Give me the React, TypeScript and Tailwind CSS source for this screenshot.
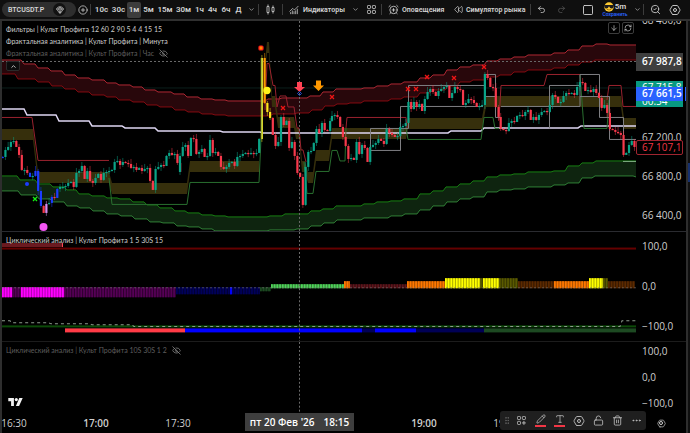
import React from "react";
import {
  AlarmClockPlus,
  ArrowDown,
  ChartNoAxesCombined,
  ChevronDown,
  ChevronUp,
  CirclePlus,
  Ellipsis,
  EyeOff,
  Gem,
  GripVertical,
  Hexagon,
  LockOpen,
  Pencil,
  Redo2,
  RefreshCw,
  Rewind,
  SearchCheck,
  Square,
  Trash2,
  Type,
  Undo2,
} from "lucide-react";

type Point = [number, number];

/* ---------- price data ---------- */

const STEP = 2.73;

const SEGMENTS: { x: number; closes: number[] }[] = [
  {
    x: 2.7,
    closes: [
      157, 150, 147, 142, 141, 147, 155, 170, 170, 173, 177, 176, 171, 191, 206, 213, 204, 203, 197, 198, 189, 187,
      187, 186, 183, 182, 187, 173, 171, 166, 179, 171, 181, 183, 178, 174, 180, 173, 172, 171, 170, 162, 161, 165,
      162, 163, 164, 168, 167, 170, 168, 171, 169, 168, 181, 190, 169, 167, 165, 166, 156, 153, 155, 154, 163, 172,
    ],
  },
  {
    x: 180,
    closes: [
      156, 147, 145, 156, 138, 139, 154, 152, 149, 157, 156, 140, 153, 152, 156, 167, 169, 167, 163, 162, 166, 157,
      156, 154, 153, 154, 153, 154, 153, 139, 58, 103, 112, 118, 135, 146, 142, 117, 125, 121, 148, 142, 156, 173,
      177, 205, 167, 152, 151, 143, 129, 133, 123, 130, 131, 121,
    ],
  },
  {
    x: 332,
    closes: [
      116, 115, 117, 127, 137, 146, 159, 158, 160, 142, 154, 145, 148, 162, 147, 145, 143, 139, 141, 144, 129, 133,
      135, 137, 136, 127, 126, 123, 102, 109, 102, 107, 104, 111, 99, 92, 89, 92, 96, 91, 89, 87, 86, 98, 93, 87,
      89, 90, 105, 103, 99, 100, 103, 107, 106, 105, 74, 78, 87, 88, 107, 117,
    ],
  },
  {
    x: 500.7,
    closes: [
      129, 130, 131, 123, 121, 122, 116, 115, 116, 112, 110, 120, 117, 120, 115, 112, 111, 112, 105, 95, 97, 103,
      102, 96, 93, 94, 93, 95, 87, 82, 83, 91, 90, 92, 89, 93, 98, 108, 105, 113, 129, 130, 132, 133, 135, 155, 153,
      145, 141, 147,
    ],
  },
];

const UP = "#0aa588";
const DOWN = "#f7394c";

type Candle = { x: number; open: number; close: number; color: string };

const candles: Candle[] = [];
let lastClose = 158;
SEGMENTS.forEach((segment, s) => {
  segment.closes.forEach((close, i) => {
    let color = close <= lastClose ? UP : DOWN;
    if (s === 0 && [0, 10, 12, 13, 14, 18, 20].includes(i)) color = "#1c3cff";
    if (s === 0 && i === 16) color = "#d58cf0";
    if (s === 1 && i >= 30 && i <= 33) color = i === 31 ? "#ff9800" : "#ffe61a";
    candles.push({ x: segment.x + i * STEP, open: lastClose, close, color });
    lastClose = s === 1 && i === 30 ? 58 : close;
  });
});

/* ---------- bands and levels ---------- */

const RED_TOP: Point[] = [
  [2, 60], [24, 64], [38, 68], [51, 71], [65, 75], [78, 78], [92, 80], [107, 83], [119, 85], [133, 87], [145, 90],
  [158, 92], [174, 94], [187, 97], [201, 99], [215, 100], [228, 101], [268, 99], [282, 98], [310, 96], [323, 92],
  [336, 89], [364, 88], [377, 86], [391, 84], [404, 82], [420, 78], [433, 75], [447, 70], [460, 67], [473, 65],
  [487, 61], [500, 59], [514, 57], [528, 55], [554, 53], [568, 50], [582, 46], [596, 44], [610, 45], [636, 45],
];
const RED_BOTTOM: Point[] = [
  [2, 74], [18, 79], [38, 82], [52, 86], [65, 89], [78, 92], [92, 95], [107, 97], [119, 100], [133, 102], [147, 105],
  [160, 107], [175, 110], [188, 112], [202, 114], [215, 115], [228, 116], [273, 114], [297, 113], [312, 110],
  [325, 106], [337, 104], [350, 103], [364, 101], [391, 99], [404, 97], [420, 93], [433, 90], [448, 86], [460, 82],
  [473, 80], [487, 77], [500, 75], [514, 72], [528, 70], [554, 68], [568, 65], [582, 62], [595, 60], [636, 60],
];
const GREEN_TOP: Point[] = [
  [2, 176], [20, 180], [38, 184], [53, 187], [67, 190], [79, 194], [92, 196], [107, 198], [120, 199], [133, 202],
  [147, 205], [160, 208], [175, 211], [188, 213], [202, 215], [215, 216], [228, 217], [270, 216], [285, 214],
  [311, 211], [323, 209], [336, 206], [364, 204], [377, 202], [391, 201], [404, 199], [420, 194], [433, 191],
  [446, 187], [460, 184], [473, 181], [487, 177], [500, 175], [514, 174], [528, 172], [554, 171], [568, 166],
  [582, 163], [596, 161], [636, 161],
];
const GREEN_BOTTOM: Point[] = [
  [2, 191], [21, 195], [39, 199], [53, 202], [67, 206], [80, 208], [93, 211], [107, 214], [121, 216], [135, 219],
  [150, 222], [163, 223], [177, 226], [189, 227], [202, 229], [215, 231], [270, 230], [297, 229], [311, 226],
  [324, 223], [337, 220], [364, 218], [391, 216], [405, 214], [420, 210], [433, 206], [447, 202], [460, 199],
  [473, 197], [487, 192], [500, 190], [514, 189], [528, 187], [554, 185], [568, 183], [582, 178], [595, 176],
  [636, 177],
];
const MEAN: Point[] = [
  [2, 109], [27, 115], [59, 121], [92, 126], [125, 128], [158, 131], [223, 132], [263, 133], [451, 131], [484, 128],
  [581, 126], [636, 126],
];

const stepped = (points: Point[]): Point[] =>
  points.flatMap(([x, y], i): Point[] => (i === 0 ? [[x, y]] : [[x - 3, points[i - 1][1]], [x, y]]));
const toPoints = (points: Point[]) => points.map((p) => p.join(",")).join(" ");
const area = (top: Point[], bottom: Point[]) => toPoints([...stepped(top), ...stepped(bottom).reverse()]);

const ZONE_BEFORE: Point[] = [
  [2, 129], [33, 129], [38, 172], [109, 172], [112, 183], [187, 183], [190, 161], [259, 161],
];
const ZONE_AFTER: Point[] = [
  [265, 62], [267, 42], [269, 42], [272, 96], [275, 96], [278, 117], [294, 117], [296, 128], [299, 128], [302, 161],
  [305, 161], [308, 172], [313, 172], [316, 150], [329, 150], [332, 128], [406, 128], [408, 118], [482, 118],
  [486, 96], [621, 96], [624, 118], [636, 118],
];
const zoneArea = (top: Point[]) => toPoints([...top, ...top.map(([x, y]): Point => [x, y + 11]).reverse()]);

/* ---------- oscillator data ---------- */

type Bars = { from: number; to: number; y: number; h: number; a: string; b: string };
const BARS: Bars[] = [
  { from: 2, to: 12, y: 287, h: 10, a: "#ff00ff", b: "#b000b0" },
  { from: 12, to: 21, y: 287, h: 10, a: "#560056", b: "#300030" },
  { from: 21, to: 64, y: 287, h: 10, a: "#ff00ff", b: "#b000b0" },
  { from: 64, to: 176, y: 287, h: 10, a: "#560056", b: "#2c002c" },
  { from: 176, to: 230, y: 287, h: 7, a: "#00005a", b: "#000030" },
  { from: 230, to: 232, y: 287, h: 7, a: "#0000ff", b: "#0000ff" },
  { from: 232, to: 260, y: 287, h: 7, a: "#00005a", b: "#000030" },
  { from: 260, to: 271, y: 287, h: 4, a: "#1d4a22", b: "#102c14" },
  { from: 271, to: 344, y: 284, h: 4, a: "#50d45a", b: "#2f7d35" },
  { from: 344, to: 350, y: 281, h: 7, a: "#ff7800", b: "#b35400" },
  { from: 350, to: 407, y: 284, h: 4, a: "#5f161c", b: "#330b0f" },
  { from: 407, to: 445, y: 281, h: 7, a: "#ff7800", b: "#a85000" },
  { from: 445, to: 480, y: 278, h: 10, a: "#ffff00", b: "#aaaa00" },
  { from: 480, to: 483, y: 278, h: 10, a: "#5a5a00", b: "#3c3c00" },
  { from: 483, to: 499, y: 278, h: 10, a: "#ffff00", b: "#aaaa00" },
  { from: 499, to: 518, y: 278, h: 10, a: "#5a5a00", b: "#333300" },
  { from: 518, to: 554, y: 281, h: 7, a: "#5c2a00", b: "#331700" },
  { from: 554, to: 589, y: 281, h: 7, a: "#ff7800", b: "#a85000" },
  { from: 589, to: 603, y: 278, h: 10, a: "#ffff00", b: "#aaaa00" },
  { from: 603, to: 608, y: 278, h: 10, a: "#5a5a00", b: "#333300" },
  { from: 608, to: 635, y: 281, h: 7, a: "#5c2a00", b: "#331700" },
];

const TREND = [
  { from: 65, to: 185, color: "#ff3b46" },
  { from: 185, to: 362, color: "#0000ff" },
  { from: 362, to: 375, color: "#000055" },
  { from: 375, to: 416, color: "#0000ff" },
  { from: 416, to: 484, color: "#000055" },
  { from: 484, to: 636, color: "#1d4a22" },
];

const CROSSES: Point[] = [
  [283, 108], [332, 97], [408, 89], [416, 89], [427, 77], [454, 78], [484, 67],
];

/* ---------- drawings ---------- */

function Crosshair({ from, to }: { from: number; to: number }) {
  return <line x1="299.5" x2="299.5" y1={from} y2={to} stroke="#6a6a6a" strokeDasharray="2 2" />;
}

function PriceChart() {
  return (
    <svg className="min-w-0 flex-1" viewBox="2 21 634 210" preserveAspectRatio="none" fill="none" aria-label="BTCUSDT.P">
      <line x1="2" x2="636" y1="88" y2="88" stroke="#0b1f1c" />
      <polygon points={area(RED_TOP, RED_BOTTOM)} fill="#28070b" />
      <polygon points={area(GREEN_TOP, GREEN_BOTTOM)} fill="#0e240f" />
      <polyline points={toPoints(stepped(RED_TOP))} stroke="#b02833" />
      <polyline points={toPoints(stepped(RED_BOTTOM))} stroke="#860a10" />
      <polyline points={toPoints(stepped(GREEN_TOP))} stroke="#178012" />
      <polyline points={toPoints(stepped(GREEN_BOTTOM))} stroke="#2f8036" />
      <polygon points={zoneArea(ZONE_BEFORE)} fill="#362f0c" />
      <polygon points={zoneArea(ZONE_AFTER)} fill="#362f0c" />
      <polyline points={toPoints(stepped(MEAN))} stroke="#ded6f2" strokeWidth="1.5" />

      <g stroke="#9a222e">
        <polyline points="2,117.5 32,117.5 38,160.5 109,160.5" />
        <polyline points="265,110 267,63.5 269,63.5 273,85.5 275,85.5 277,107 280,96 286,96 288,107 294,107 297,128 299,128 301,150 303,150 306,162" />
        <polyline points="346,128 347,117.5 406,117.5 407,128" />
        <polyline points="499,120 501,85.5 544,85.5 547,74.5 580,74.5" />
        <polyline points="607,100 609,85.5 621,85.5 623,106.5 636,106.5" />
      </g>
      <g stroke="#296f2f">
        <polyline points="109,178 112,204.5 187,204.5 190,182.5 259,182.5 261,139" />
        <polyline points="304,162 307,193.5 313,193.5 316,171.5 329,171.5 332,150.5 337,150.5 340,161 345,161 346,128" />
        <polyline points="406,128 408,139.5 481,139.5 484,117.5 493,117.5 495,128.5 499,128.5" />
        <polyline points="580,75 584,128.5 607,128.5 609,100" />
      </g>
      <g stroke="#808084">
        <polyline points="370.5,128.5 370.5,150.5 400.5,150.5 400.5,106.5 483,106.5" />
        <polyline points="370.5,128.5 408.5,128.5 408.5,85.5 484.5,85.5 484.5,74.5 495.5,74.5 495.5,117.5 500,117.5" />
        <polyline points="484,96.5 497,96.5" />
        <polyline points="501,106.5 580,106.5 580,74.5 599.5,74.5 599.5,117.5 623.5,117.5 623.5,139.5" />
        <polyline points="549.5,128.5 549.5,85.5 580,85.5" />
        <polyline points="580,96.5 609.5,96.5 609.5,139.5 636,139.5" />
      </g>
      <line x1="623" x2="636" y1="161.5" y2="161.5" stroke="#7fae84" />

      <line x1="2" x2="636" y1="61.5" y2="61.5" stroke="#6a6a6a" strokeDasharray="2 2" />
      <Crosshair from={21} to={231} />

      {candles.map((c, i) => {
        const top = Math.min(c.open, c.close);
        const height = Math.max(1.2, Math.abs(c.open - c.close));
        const wick = 1 + ((i * 7) % 5);
        return (
          <g key={i}>
            <line x1={c.x} x2={c.x} y1={top - wick} y2={top + height + ((i * 3) % 5)} stroke={c.color} strokeOpacity="0.5" />
            <rect x={c.x - 1.1} y={top} width="2.2" height={height} fill={c.color} />
          </g>
        );
      })}
      <line x1="261.8" x2="261.8" y1="58" y2="139" stroke="#5f9a5a" strokeWidth="0.8" />

      {CROSSES.map(([x, y]) => (
        <path key={x} d={`M${x - 2} ${y - 2}l4 4m0-4l-4 4`} stroke="#f01515" strokeWidth="1.3" />
      ))}
      <path d="M33 197l4 4m0-4l-4 4" stroke="#13f013" strokeWidth="1.3" />
      <circle cx="27" cy="184" r="2" fill="#1c3cff" />
      <circle cx="43.5" cy="227" r="4" fill="#f556f5" />
      <circle cx="267" cy="90.5" r="3.7" fill="#fff21a" />
      <rect x="259" y="46" width="4" height="4" rx="1" fill="#ff8a00" stroke="#ff1a1a" strokeWidth="1.2" />
      <path d="M297 82h5v5h3l-5.5 5-5.5-5h3z" fill="#ff4254" />
      <path d="M316 80.5h5v5h3l-5.5 5.5-5.5-5.5h3z" fill="#ff9800" />
      <path d="M299.5 91.5l2 2-2 2-2-2z" stroke="#2350d8" />
    </svg>
  );
}

function CycleChart() {
  return (
    <svg className="min-w-0 flex-1" viewBox="2 232 634 109" preserveAspectRatio="none" aria-label="Циклический анализ">
      <rect x="2" y="243" width="61" height="4" fill="#6b1a20" />
      <rect x="62" y="243" width="1" height="4" fill="#ff4a55" />
      <rect x="2" y="247.5" width="634" height="2" fill="#640000" />
      {BARS.map((group) => (
        <g key={group.from}>
          <rect x={group.from} y={group.y} width={group.to - group.from} height={group.h} fill={group.b} />
          <line
            x1={group.from}
            x2={group.to}
            y1={group.y + group.h / 2}
            y2={group.y + group.h / 2}
            stroke={group.a}
            strokeWidth={group.h}
            strokeDasharray="1.73 1"
          />
        </g>
      ))}
      <line x1="2" x2="636" y1="287.5" y2="287.5" stroke="#777" strokeOpacity="0.6" strokeDasharray="2 2" />
      <rect x="2" y="325" width="634" height="2" fill="#0c4a08" />
      <polyline
        points="2,320.5 10,320.5 12,322.5 49,322.5 51,323.5 90,323.5 92,324.5 132,324.5 134,326 620,326 622,320.5 636,320.5"
        fill="none"
        stroke="#8c9a8c"
        strokeDasharray="3 3"
      />
      {TREND.map((t) => (
        <rect key={t.from} x={t.from} y="328" width={t.to - t.from} height="4" fill={t.color} />
      ))}
      <Crosshair from={232} to={341} />
    </svg>
  );
}

function HexSettings({ className }: { className: string }) {
  return (
    <span className={`relative inline-flex items-center justify-center ${className}`}>
      <Hexagon className="size-full rotate-90" strokeWidth={1.8} />
      <span className="absolute size-[4px] rounded-full border border-current" />
    </span>
  );
}

function CandlesIcon() {
  return (
    <svg className="h-[11px] w-[9px]" viewBox="0 0 9 11" fill="none" stroke="currentColor" strokeWidth="0.8">
      <path d="M1 2.500h2v6H1zM2 .5v2M2 8.500v2M6 3.500h2v4H6zM7 1.500v2M7 7.500v2" />
    </svg>
  );
}

function WidgetsIcon({ className, plus }: { className: string; plus?: boolean }) {
  return (
    <svg className={className} viewBox="0 0 10 10" fill="none" stroke="currentColor">
      <rect x="0.5" y="0.5" width="3.4" height="3.4" rx="0.9" />
      <rect x="6" y="0.5" width="3.4" height="3.4" rx="0.9" />
      <rect x="0.5" y="6" width="3.4" height="3.4" rx="0.9" />
      {plus ? <path d="M7.700 5.500v4.300M5.500 7.700h4.300" /> : <rect x="6" y="6" width="3.4" height="3.4" rx="0.9" />}
    </svg>
  );
}

function SunglassesFace() {
  return (
    <svg className="size-[10px]" viewBox="0 0 20 20">
      <circle cx="10" cy="10" r="9.5" fill="#ffcc32" />
      <path d="M0 6h20l-1 4.500q-1 2.500-4 2.500-3.500 0-4.500-4h-1q-1 4-4.500 4-3 0-4-2.500z" fill="#1c1c1c" />
      <path d="M5.500 14.500q4.500 3 9 0" fill="none" stroke="#8a5a00" strokeWidth="1.5" />
    </svg>
  );
}

function BrandMark() {
  return (
    <svg className="h-[8px] w-[15px]" viewBox="0 0 36 20" fill="#f2f2f2" aria-label="TradingView">
      <path d="M14 20H7V8H0V0h14zM27 20h-8L27.500 0H36z" />
      <circle cx="20" cy="4" r="4" />
    </svg>
  );
}

/* ---------- layout parts ---------- */

const Divider = () => <span className="h-[11px] w-px shrink-0 bg-[#3c3c3c]" />;

const INTERVALS: [string, string][] = [
  ["10с", "w-[17px]"],
  ["30с", "w-[17px]"],
  ["1м", "w-[14px]"],
  ["5м", "w-[15px]"],
  ["15м", "w-[18px]"],
  ["30м", "w-[19px]"],
  ["1ч", "w-[13px]"],
  ["4ч", "w-[13px]"],
  ["6ч", "w-[14px]"],
  ["Д", "w-[11px]"],
];

function Header() {
  return (
    <header className="flex h-[21px] shrink-0 items-center border-b-2 border-[#303030] bg-[#0f0f0f] font-['Roboto','Noto_Sans',sans-serif] text-[7px] leading-[10px] font-semibold whitespace-nowrap text-[#d4d4d4]">
      <div className="ml-[2px] flex h-[15px] w-[74px] shrink-0 items-center justify-between rounded-full bg-[#2e2e2e] pr-[2px] pl-[6px]">
        <button>BTCUSDT.P</button>
        <button aria-label="Премиум" className="mr-[8px] flex size-[13px] items-center justify-center rounded-full bg-[#121212]">
          <Gem className="size-[8px]" />
        </button>
      </div>
      <button aria-label="Добавить символ" className="flex min-w-0 flex-1 justify-center">
        <CirclePlus className="size-[10px] shrink-0" strokeWidth={1.8} />
      </button>
      <Divider />
      <nav className="ml-[2px] flex shrink-0 items-center text-[8px]">
        {INTERVALS.map(([label, width]) => (
          <button
            key={label}
            className={`${width} flex h-[16px] items-center justify-center rounded-[2px] ${label === "1м" ? "bg-[#3c3c3c]" : ""}`}
          >
            {label}
          </button>
        ))}
      </nav>
      <button aria-label="Интервалы" className="flex w-[14px] shrink-0 justify-center">
        <ChevronDown className="size-[7px]" />
      </button>
      <Divider />
      <button aria-label="Свечи" className="flex w-[23px] shrink-0 justify-center">
        <CandlesIcon />
      </button>
      <Divider />
      <button className="ml-[6px] flex w-[60px] shrink-0 items-center gap-[4px]">
        <ChartNoAxesCombined className="size-[10px] shrink-0" strokeWidth={1.8} />
        <span>Индикаторы</span>
      </button>
      <button aria-label="Избранные индикаторы" className="flex w-[12px] shrink-0 justify-center">
        <ChevronDown className="size-[7px]" />
      </button>
      <button aria-label="Шаблоны" className="flex w-[20px] shrink-0 justify-center">
        <WidgetsIcon className="size-[9px]" />
      </button>
      <Divider />
      <button className="ml-[6px] flex w-[62px] shrink-0 items-center gap-[3px]">
        <AlarmClockPlus className="size-[11px] shrink-0" strokeWidth={1.8} />
        <span>Оповещения</span>
      </button>
      <button className="ml-[4px] flex w-[76px] shrink-0 items-center gap-[3px]">
        <Rewind className="size-[9px] shrink-0" strokeWidth={1.8} />
        <span>Симулятор рынка</span>
      </button>
      <Divider />
      <button aria-label="Отменить" className="flex w-[20px] shrink-0 justify-center">
        <Undo2 className="size-[9px]" />
      </button>
      <button aria-label="Повторить" className="flex w-[20px] shrink-0 justify-center text-[#555]">
        <Redo2 className="size-[9px]" />
      </button>
      <button aria-label="Макет" className="ml-[6px] flex w-[22px] shrink-0 justify-center">
        <Square className="size-[12px]" strokeWidth={1.8} />
      </button>
      <button className="flex w-[32px] shrink-0 flex-col items-center">
        <span className="flex items-center gap-[1px] text-[8px]">
          <SunglassesFace />
          5m
        </span>
        <span className="text-[5px] leading-[5px] text-[#2962ff]">Сохранить</span>
      </button>
      <button aria-label="Макеты" className="flex w-[12px] shrink-0 justify-center">
        <ChevronDown className="size-[7px]" />
      </button>
      <Divider />
      <button aria-label="Быстрый поиск" className="flex w-[22px] shrink-0 justify-center">
        <SearchCheck className="size-[11px]" strokeWidth={1.8} />
      </button>
      <button aria-label="Настройки" className="mr-[6px] flex w-[18px] shrink-0 justify-center">
        <HexSettings className="size-[12px]" />
      </button>
    </header>
  );
}

const LEGEND_BOX = "absolute top-[2px] left-[4px] font-['Lato','Roboto',sans-serif] text-[7px] leading-[12px]";

function Legend({ text, hidden }: { text: string; hidden?: boolean }) {
  return (
    <p className={`flex items-center gap-[5px] ${hidden ? "text-[#5e5e5e]" : "text-[#cccccc]"}`}>
      {text}
      {hidden && <EyeOff className="size-[9px] text-[#8a8a8a]" />}
    </p>
  );
}

const PRICES = ["68 400,0", "", "", "67 200,0", "66 800,0", "66 400,0"];
const LEVELS = ["100,0", "0,0", "−100,0"];
const TIMES = ["16:30", "17:00", "17:30", "", "", "19:00", "19:30"];

export default function App() {
  return (
    <div className="flex h-screen flex-col overflow-hidden bg-black font-['Open_Sans','Noto_Sans',sans-serif] text-[#cfcfcf]">
      <Header />
      <div className="flex min-h-0 flex-1">
        <div className="w-[2px] shrink-0 bg-[#2e2e2e]" />
        <main className="relative flex min-w-0 flex-1 flex-col text-[10px] leading-[14px]">
          <section className="relative flex min-h-0 flex-[211] overflow-hidden border-b border-[#2a2b30]">
            <PriceChart />
            <div className={LEGEND_BOX}>
              <Legend text="Фильтры | Культ Профита 12 60 2 90 5 4 4 15 15" />
              <Legend text="Фрактальная аналитика | Культ Профита | Минута" />
              <Legend text="Фрактальная аналитика | Культ Профита | Час" hidden />
              <button aria-label="Свернуть" className="mt-[2px] flex h-[10px] w-[14px] items-center justify-center rounded-[2px] border border-[#2a2a2a] bg-[#0c0c0c]">
                <ChevronUp className="size-[7px]" strokeWidth={3} />
              </button>
            </div>
            <div className="absolute top-[1px] right-[52px] flex gap-[2px]">
              <button aria-label="Прокрутить" className="flex size-[12px] items-center justify-center rounded-[2px] border border-[#3c3c3c] bg-black">
                <ArrowDown className="size-[8px]" />
              </button>
              <button aria-label="Сбросить" className="flex size-[12px] items-center justify-center rounded-[2px] border border-[#3c3c3c] bg-black">
                <RefreshCw className="size-[8px]" />
              </button>
            </div>
            <div className="relative w-[50px] shrink-0">
              <ul className="-mt-[21px]">
                {PRICES.map((price, i) => (
                  <li key={i} className="flex h-[39px] items-center pl-[6px]">
                    {price}
                  </li>
                ))}
              </ul>
              <span className="absolute top-[32px] left-0 h-[18px] w-[47px] bg-[#3e3e3e] pl-[6px] leading-[17px] font-semibold text-white">67 987,8</span>
              <span className="absolute top-[60px] left-0 flex h-[26px] w-[47px] flex-col justify-between bg-[#089981] pl-[6px] leading-[12px] text-white">
                <span>67 715,8</span>
                <span>00:54</span>
              </span>
              <span className="absolute top-[66px] left-0 h-[14px] w-[47px] bg-[#2962ff] pl-[6px] leading-[13px] font-semibold text-white">67 661,5</span>
              <span className="absolute top-[66px] right-0 h-[14px] w-px bg-[#2962ff]" />
              <span className="absolute top-[119px] left-0 h-[15px] w-[47px] rounded-[2px] border border-[#a02530] bg-black pl-[5px] leading-[13px] text-[#f23645]">67 107,1</span>
            </div>
          </section>

          <section className="relative flex min-h-0 flex-[110] overflow-hidden border-b border-[#1c1c1c]">
            <CycleChart />
            <div className={LEGEND_BOX}>
              <Legend text="Циклический анализ | Культ Профита 1 5 30S 15" />
            </div>
            <ul className="-mt-[6px] w-[50px] shrink-0">
              {LEVELS.map((level) => (
                <li key={level} className="flex h-[40px] items-center pl-[6px]">
                  {level}
                </li>
              ))}
            </ul>
          </section>

          <section className="relative flex min-h-0 flex-[71] overflow-hidden">
            <svg className="min-w-0 flex-1" viewBox="2 342 634 71" preserveAspectRatio="none">
              <Crosshair from={342} to={413} />
            </svg>
            <div className={LEGEND_BOX}>
              <Legend text="Циклический анализ | Культ Профита 10S 30S 1 2" hidden />
            </div>
            <div className="absolute bottom-[7px] left-[6px]">
              <BrandMark />
            </div>
            <ul className="-mt-[4px] w-[50px] shrink-0">
              {LEVELS.map((level) => (
                <li key={level} className="flex h-[26px] items-center pl-[6px]">
                  {level}
                </li>
              ))}
            </ul>
          </section>

          <footer className="relative flex h-[20px] shrink-0 items-center overflow-hidden">
            <ol className="-ml-[29px] flex min-w-0 flex-1">
              {TIMES.map((time, i) => (
                <li key={i} className={`w-[82px] shrink-0 text-center ${time.endsWith("00") ? "font-semibold" : ""}`}>
                  {time}
                </li>
              ))}
            </ol>
            <button aria-label="Настройки шкалы" className="flex w-[50px] shrink-0 justify-center">
              <HexSettings className="size-[9px]" />
            </button>
            <time className="absolute top-0 left-[243px] flex h-[18px] w-[109px] items-center justify-center gap-[9px] bg-[#3e3e3e] font-semibold whitespace-nowrap text-white">
              <span>пт 20 Фев '26</span>
              <span>18:15</span>
            </time>
          </footer>

          <div
            role="toolbar"
            className="absolute right-[40px] bottom-[3px] flex h-[19px] w-[146px] items-center rounded-[3px] bg-[#1f1f1f] pl-[2px] text-[#c0c0c0]"
          >
            <GripVertical className="w-[10px] text-[#666]" size={9} />
            <button aria-label="Шаблоны" className="flex flex-1 justify-center">
              <WidgetsIcon className="size-[9px]" plus />
            </button>
            <button aria-label="Цвет линии" className="flex flex-1 flex-col items-center gap-[1px]">
              <Pencil className="size-[10px]" strokeWidth={1.8} />
              <span className="h-[2px] w-[11px] bg-[#f23645]" />
            </button>
            <button aria-label="Цвет текста" className="flex flex-1 flex-col items-center gap-[1px]">
              <Type className="size-[10px]" strokeWidth={1.8} />
              <span className="h-[2px] w-[11px] bg-[#f23645]" />
            </button>
            <button aria-label="Настройки" className="flex flex-1 justify-center">
              <HexSettings className="size-[12px]" />
            </button>
            <button aria-label="Заблокировать" className="flex flex-1 justify-center">
              <LockOpen className="size-[11px]" strokeWidth={1.8} />
            </button>
            <button aria-label="Удалить" className="flex flex-1 justify-center">
              <Trash2 className="size-[11px]" strokeWidth={1.8} />
            </button>
            <button aria-label="Ещё" className="flex flex-1 justify-center">
              <Ellipsis className="size-[11px]" />
            </button>
          </div>
        </main>
        <div className="w-[2px] shrink-0 bg-[#2e2e2e]" />
        <aside className="flex w-[2px] shrink-0 flex-col bg-[#0f0f0f] pt-[142px]">
          <span className="h-[19px] bg-[#16306e]" />
        </aside>
      </div>
    </div>
  );
}
